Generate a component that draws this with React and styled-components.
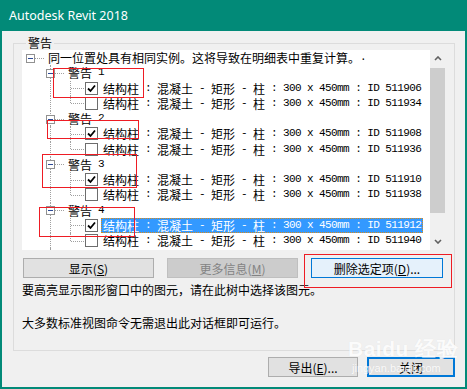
import React from "react";
import styled, { createGlobalStyle } from "styled-components";

const GlobalStyle = createGlobalStyle`
  html, body {
    margin: 0;
    padding: 0;
    background: #ffffff;
  }
  body {
    font-family: "Noto Sans CJK SC", "Noto Sans", sans-serif;
    font-size: 12px;
    color: #000;
  }
`;

const CJK = `"Noto Sans CJK SC", "Noto Sans", sans-serif`;

const Window = styled.div`
  position: relative;
  width: 467px;
  height: 389px;
  box-sizing: border-box;
  background: #028a78;
  padding: 0 2px 2px 2px;
  display: flex;
  flex-direction: column;
  overflow: hidden;
`;

const TitleBar = styled.div`
  height: 31px;
  display: flex;
  align-items: center;
  padding-left: 7px;
  color: #ffffff;
  font-family: "Noto Sans", "Open Sans", sans-serif;
  font-size: 12.5px;
`;

const Body = styled.div`
  flex: 1;
  background: #f0f0f0;
  display: flex;
  flex-direction: column;
`;

const Group = styled.fieldset`
  margin: 5px 10px 0 11px;
  padding: 0 9px 19px 8px;
  border: 1px solid #dcdcdc;
  min-width: 0;
`;

const Legend = styled.legend`
  margin-left: 4px;
  padding: 0 2px;
  font-family: ${CJK};
  font-size: 12px;
  line-height: 14px;
`;

const TreeBox = styled.div`
  height: 200px;
  display: flex;
  background: #ffffff;
`;

const TreeList = styled.div`
  flex: 1;
  overflow: hidden;
`;

const Row = styled.div`
  height: 15.25px;
  display: flex;
  align-items: stretch;
  white-space: nowrap;
`;

const Cell = styled.div`
  position: relative;
  width: 20px;
  flex: none;

  &::before {
    content: "";
    display: ${(p) => (p.$vert ? "block" : "none")};
    position: absolute;
    left: 8px;
    top: 0;
    height: ${(p) => (p.$vert === "half" ? "50%" : "100%")};
    border-left: 1px dotted #a0a0a0;
  }

  &::after {
    content: "";
    display: ${(p) => (p.$horiz ? "block" : "none")};
    position: absolute;
    left: 9px;
    right: -2px;
    top: 50%;
    border-top: 1px dotted #a0a0a0;
  }
`;

const Expander = styled.span`
  position: absolute;
  z-index: 1;
  left: 4px;
  top: calc(50% - 4px);
  width: 7px;
  height: 7px;
  border: 1px solid #919191;
  background: #fff;

  &::after {
    content: "";
    position: absolute;
    left: 1px;
    right: 1px;
    top: 3px;
    height: 1px;
    background: #2c4a96;
  }
`;

const Check = styled.span`
  flex: none;
  align-self: center;
  margin-left: 3px;
  width: 11px;
  height: 11px;
  border: 1px solid #6d6d6d;
  background: #fff;
  display: flex;
  align-items: center;
  justify-content: center;
`;

const Label = styled.span`
  display: flex;
  align-items: center;
  margin-left: ${(p) => (p.$afterCheck ? "3px" : "4px")};
  padding: 0 2px;
  font-family: ${CJK};
  font-size: 12px;
  line-height: 15px;
  background: ${(p) => (p.$selected ? "#3399ff" : "transparent")};
  color: ${(p) => (p.$selected ? "#ffffff" : "#000000")};
  outline: ${(p) => (p.$selected ? "1px dotted #d98a1a" : "none")};
  outline-offset: -1px;
`;

const Ascii = styled.span`
  font-family: "Liberation Mono", monospace;
  font-size: 11px;
  letter-spacing: -0.6px;
  white-space: pre;
`;

const ScrollBar = styled.div`
  width: 15px;
  flex: none;
  background: #f0f0f0;
  display: flex;
  flex-direction: column;
`;

const ScrollArrow = styled.div`
  height: 17px;
  display: flex;
  align-items: center;
  justify-content: center;
`;

const Thumb = styled.div`
  height: 145px;
  margin-top: 1px;
  background: #cdcdcd;
`;

const Track = styled.div`
  flex: 1;
`;

const ButtonRow = styled.div`
  display: flex;
  gap: 13px;
  margin: 8px 0 0 1px;
`;

const Button = styled.div`
  width: ${(p) => p.$w || 131}px;
  height: 20px;
  box-sizing: border-box;
  display: flex;
  align-items: center;
  justify-content: center;
  font-family: ${CJK};
  font-size: 12px;
  background: ${(p) => (p.$disabled ? "#cccccc" : p.$hot ? "#e5f1fb" : "#e1e1e1")};
  color: ${(p) => (p.$disabled ? "#838383" : "#000")};
  border: ${(p) =>
    p.$default
      ? "2px solid #0078d7"
      : p.$hot
      ? "1px solid #0078d7"
      : p.$disabled
      ? "1px solid #bfbfbf"
      : "1px solid #adadad"};
`;

const Hint = styled.div`
  font-family: ${CJK};
  font-size: 12px;
  line-height: 16px;
  margin-top: ${(p) => p.$gap}px;
`;

const Footer = styled.div`
  display: flex;
  justify-content: flex-end;
  gap: 9px;
  padding: 6px 10px 0 0;
`;

const Annotation = styled.div`
  position: absolute;
  border: 1px solid #ee1c24;
  pointer-events: none;
  z-index: 5;
`;

const Watermark = styled.div`
  position: absolute;
  left: 348px;
  top: 338px;
  color: rgba(255, 255, 255, 0.9);
  text-shadow: 0 0 1px rgba(0, 0, 0, 0.07);
  font-family: "Liberation Sans", sans-serif;
  pointer-events: none;
  z-index: 4;
  line-height: 1;
`;

const MarkTop = styled.div`
  font-size: 21px;
  font-weight: bold;
  letter-spacing: 0.5px;
`;

const MarkSub = styled.div`
  font-size: 11px;
  margin: 4px 0 0 4px;
`;

function Mixed({ text }) {
  const parts = text.match(/[\u0000-\u007f]+|[^\u0000-\u007f]+/g) || [];
  return parts.map((p, i) =>
    /^[\u0000-\u007f]/.test(p) ? <Ascii key={i}>{p}</Ascii> : <span key={i}>{p}</span>
  );
}

const CheckMark = () => (
  <svg width="9" height="9" viewBox="0 0 9 9">
    <path d="M1 4.5 L3.5 7 L8 1.5" fill="none" stroke="#000" strokeWidth="1.8" />
  </svg>
);

const Chevron = ({ down }) => (
  <svg width="8" height="5" viewBox="0 0 8 5">
    <path
      d={down ? "M1 1 L4 4 L7 1" : "M1 4 L4 1 L7 4"}
      fill="none"
      stroke="#606060"
      strokeWidth="1.6"
    />
  </svg>
);

const pairs = [
  ["511906", "511934"],
  ["511908", "511936"],
  ["511910", "511938"],
  ["511912", "511940"],
];

const item = (id) => `结构柱 : 混凝土 - 矩形 - 柱 : 300 x 450mm : ID ${id}`;

const rows = [
  { level: 0, root: true, group: true, text: "同一位置处具有相同实例。这将导致在明细表中重复计算。." },
];
pairs.forEach(([a, b], i) => {
  rows.push({ level: 1, group: true, text: `警告 ${i + 1}` });
  rows.push({ level: 2, checked: true, selected: i === 3, text: item(a) });
  rows.push({ level: 2, checked: false, last: true, text: item(b) });
});
// next warning, only its top shows above the tree's lower edge
rows.push({ level: 1, group: true, text: "警告 5" });

function TreeRow({ row }) {
  const guides = row.level === 2 ? [false, true] : row.level === 1 ? [false] : [];
  const vert = row.root ? false : row.last ? "half" : "full";
  return (
    <Row>
      {guides.map((g, i) => (
        <Cell key={i} $vert={g ? "full" : false} />
      ))}
      <Cell $vert={vert} $horiz>
        {row.group && <Expander />}
      </Cell>
      {row.level === 2 && <Check>{row.checked && <CheckMark />}</Check>}
      <Label $afterCheck={row.level === 2} $selected={row.selected}>
        <Mixed text={row.text} />
      </Label>
    </Row>
  );
}

export default function App() {
  return (
    <>
      <GlobalStyle />
      <Window>
        <TitleBar>Autodesk Revit 2018</TitleBar>
        <Body>
          <Group>
            <Legend>警告</Legend>
            <TreeBox>
              <TreeList>
                {rows.map((r, i) => (
                  <TreeRow key={i} row={r} />
                ))}
              </TreeList>
              <ScrollBar>
                <ScrollArrow>
                  <Chevron />
                </ScrollArrow>
                <Thumb />
                <Track />
                <ScrollArrow>
                  <Chevron down />
                </ScrollArrow>
              </ScrollBar>
            </TreeBox>
            <ButtonRow>
              <Button>
                显示(<u>S</u>)
              </Button>
              <Button $disabled>
                更多信息(<u>M</u>)
              </Button>
              <Button $hot $w={132}>
                删除选定项(<u>D</u>)...
              </Button>
            </ButtonRow>
            <Hint $gap={4}>要高亮显示图形窗口中的图元，请在此树中选择该图元。</Hint>
            <Hint $gap={17}>大多数标准视图命令无需退出此对话框即可运行。</Hint>
          </Group>
          <Footer>
            <Button $w={90}>
              导出(<u>E</u>)...
            </Button>
            <Button $w={88} $default>
              关闭
            </Button>
          </Footer>
        </Body>

        <Watermark>
          <MarkTop>Baidu 经验</MarkTop>
          <MarkSub>jingyan.baidu.com</MarkSub>
        </Watermark>

        <Annotation style={{ left: 53, top: 68, width: 89, height: 28 }} />
        <Annotation style={{ left: 47, top: 120, width: 90, height: 17 }} />
        <Annotation style={{ left: 42, top: 154, width: 93, height: 32 }} />
        <Annotation style={{ left: 39, top: 207, width: 94, height: 28 }} />
        <Annotation style={{ left: 304, top: 254, width: 146, height: 32 }} />
      </Window>
    </>
  );
}
